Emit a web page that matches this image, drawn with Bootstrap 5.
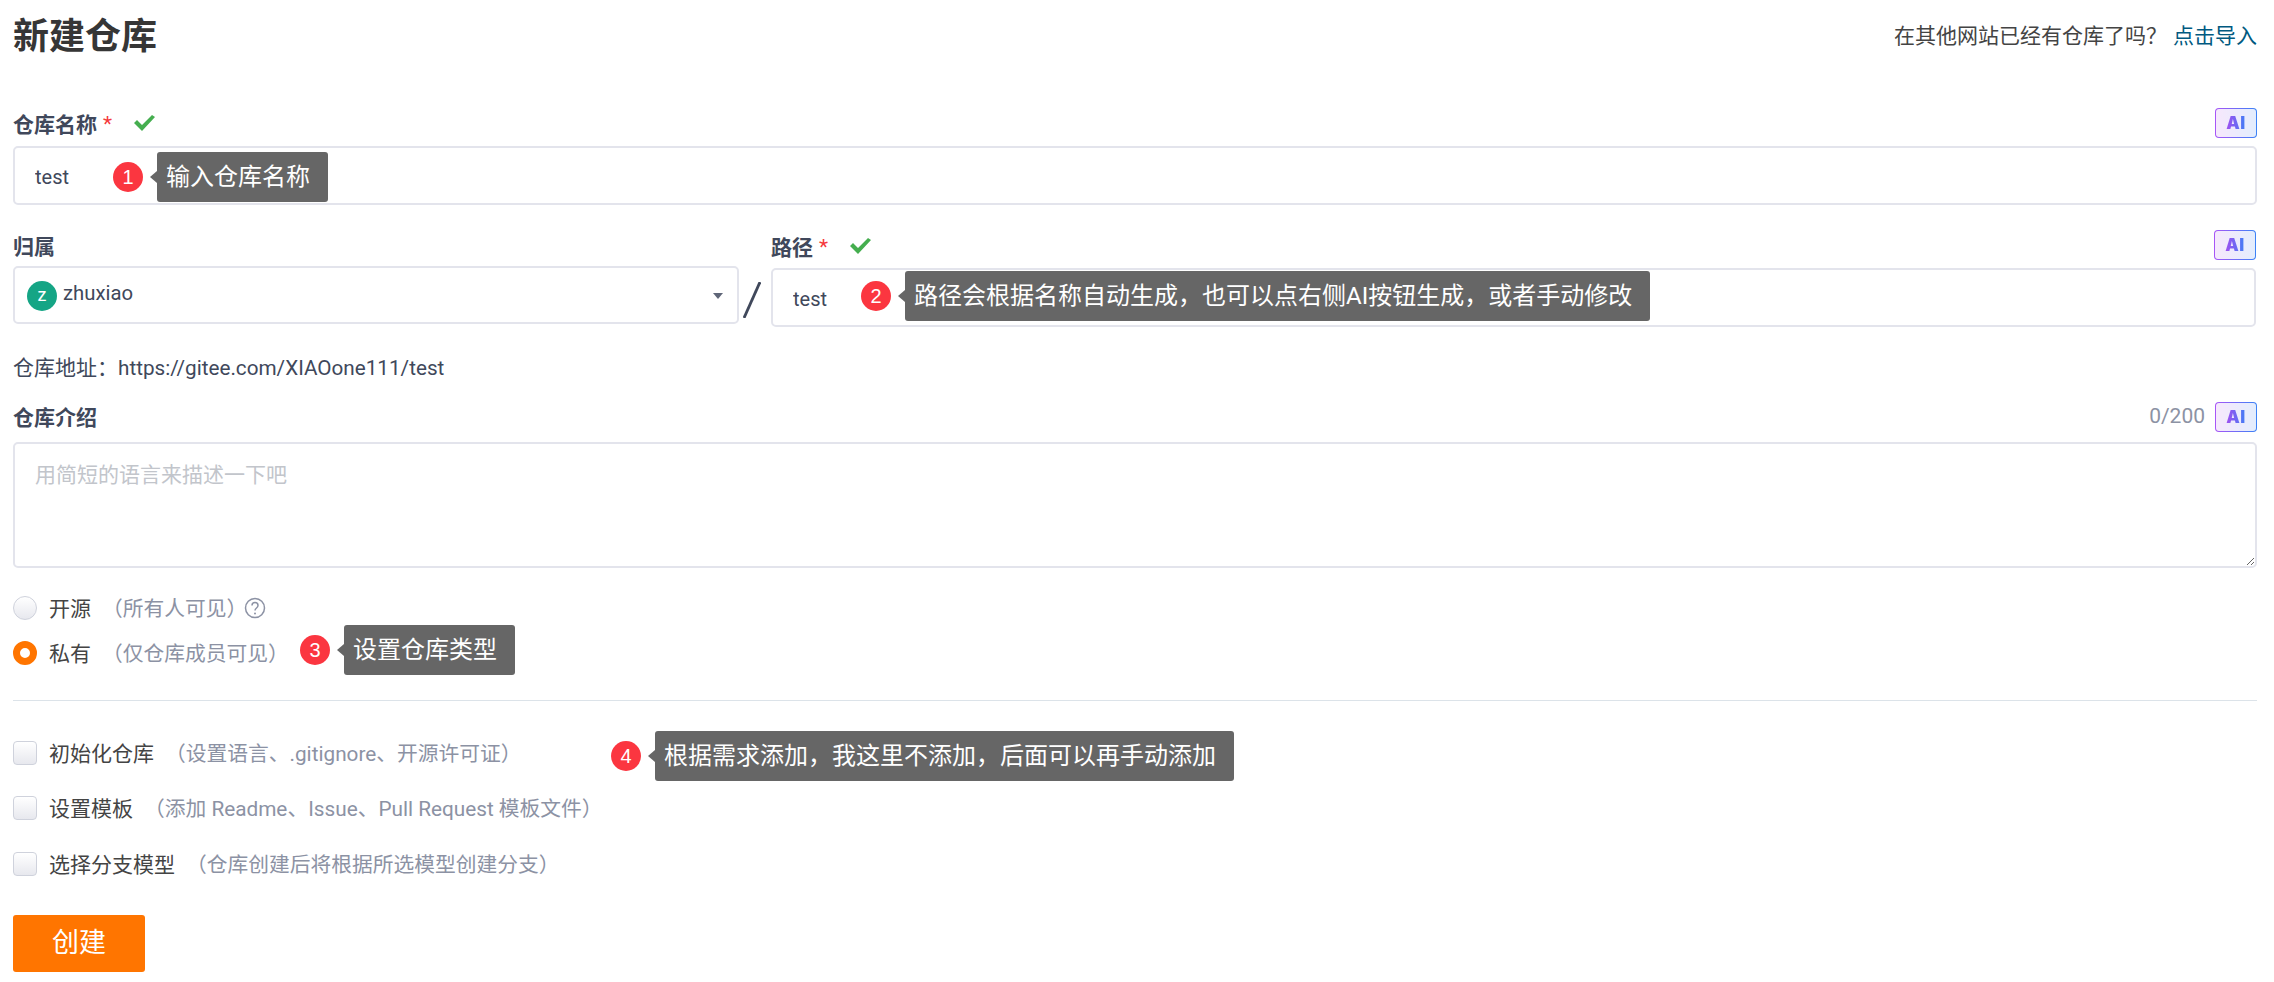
<!DOCTYPE html>
<html lang="zh-CN">
<head>
  <meta charset="UTF-8">
  <meta name="viewport" content="width=device-width, initial-scale=1">
  <title>新建仓库</title>
  <link href="https://cdn.jsdelivr.net/npm/bootstrap@5.3.0/dist/css/bootstrap.min.css" rel="stylesheet">
  <style>
    body {
      font-family: Roboto, "Noto Sans CJK SC", sans-serif;
      font-size: 21px;
      color: #40485b;
      background: #fff;
    }
    .page { padding: 0 17px 0 13px; }
    .page-head { height: 108px; padding-top: 14px; }
    .page-title { font-size: 36px; font-weight: 700; line-height: 46px; color: #363636; margin: 0; }
    .import-tip { color: #444; line-height: 44px; }
    .import-tip a { color: #005980; text-decoration: none; margin-left: 6px; }
    .label-row { height: 30px; margin-bottom: 8px; }
    .field-label { font-weight: 700; color: #40485b; line-height: 30px; }
    .name-label { padding-top: 4px; }
    .req { color: #f5393c; font-weight: 400; margin-left: 6px; }
    .ok-mark { width: 21px; height: 16px; margin-left: 22px; margin-top: -4px; }
    .ai-btn {
      width: 42px; height: 30px; border: 1px solid transparent; border-radius: 4px;
      background: linear-gradient(90deg, #f6e8fc, #e3edfd) padding-box, linear-gradient(90deg, #a855f7, #3b82f6) border-box;
      font-family: Inter, sans-serif; font-size: 17px; font-weight: 900; line-height: 28px; letter-spacing: .5px; text-align: center;
    }
    .ai-btn span {
      background: linear-gradient(90deg, #a24ff0, #3f7ef5);
      -webkit-background-clip: text; background-clip: text; color: transparent;
    }
    .form-control.plain-input {
      height: 59px; font-size: 20px; color: #40485b; padding: 2px 20px 0;
      border: 2px solid #e3e4ec; border-radius: 5px; box-shadow: none;
    }
    .form-control.intro-input {
      height: 126px; font-size: 21px; padding: 16px 20px; line-height: 30px;
      border: 2px solid #e3e4ec; border-radius: 5px; box-shadow: none;
    }
    .intro-input::placeholder { color: #c2c5cb; }
    .second-row { margin-top: 25px; }
    .owner-col { width: 726px; }
    .owner-label { height: 32px; margin-bottom: 4px; padding-top: 2px; }
    .owner-select {
      height: 58px; border: 2px solid #e3e4ec; border-radius: 5px; padding: 0 14px 4px 12px; font-size: 20.3px;
    }
    .owner-ava {
      width: 30px; height: 30px; background: #15a585; color: #fff; font-size: 18px; line-height: 28px;
      text-align: center; border-radius: 50%; margin: 6px 6px 0 0;
    }
    .owner-caret { width: 0; height: 0; border: 5.5px solid transparent; border-top: 6px solid #5f6678; border-bottom: 0; margin-top: 6px; }
    .path-slash { width: 32px; padding: 52px 0 0 4px; }
    .path-slash svg { width: 18px; height: 36px; }
    .path-label { padding-top: 6px; }
    .path-col { margin-right: 1px; }
    .repo-url { margin-top: 26px; line-height: 30px; }
    .url-text { font-size: 20.7px; }
    .intro-block { margin-top: 19px; }
    .intro-block .label-row { margin-bottom: 10px; }
    .intro-label { padding-top: 2px; }
    .counter { color: #8c92a4; margin-right: 10px; }
    .opt-row { height: 32px; gap: 12px; color: #444; }
    .opt-row > span:not(.callout) { padding-top: 3px; }
    .opt-row .form-check-input {
      width: 24px; height: 24px; margin: 0; flex-shrink: 0; float: none;
      border: 1px solid #cfd2dc; background-color: #fff;
      background-image: linear-gradient(180deg, #fff, #e7e8ee);
    }
    .opt-row input[type=checkbox] { border-radius: 4px; }
    .opt-row .form-check-input:checked {
      background-color: #fff; background-image: none; border: 7px solid #ff7500;
    }
    .opt-hint { color: #8c92a4; margin-left: 11px; font-size: 20.75px; }
    .help-mark { width: 22px; height: 22px; margin-left: -15px; }
    .radios { margin-top: 24px; }
    .radios .opt-row + .opt-row { margin-top: 13px; }
    .split { margin: 31px 0 36px; border: 0; border-top: 1px solid #dce3e9; opacity: 1; }
    .checks .opt-row + .opt-row { margin-top: 23px; }
    .checks .opt-row:last-child { margin-top: 24px; }
    .btn.create-btn {
      width: 132px; height: 57px; margin-top: 35px; padding: 0; font-size: 27px; line-height: 1;
      background: #ff7500; border: 0; border-radius: 3px; color: #fff;
    }
    .callout { position: absolute; display: flex; align-items: center; gap: 14px; white-space: nowrap; z-index: 2; }
    .step-dot {
      width: 30px; height: 30px; border-radius: 50%; background: #fb3640; color: #fff;
      font-family: "Liberation Sans", sans-serif; font-size: 20px; line-height: 30px; text-align: center;
    }
    .tip-box {
      position: relative; height: 50px; padding: 0 18px 0 9px; background: #666; color: #fff;
      font-size: 24px; line-height: 50px; border-radius: 3px;
    }
    .tip-box::before {
      content: ""; position: absolute; left: -7px; top: 19px;
      border: 6px solid transparent; border-left: 0; border-right: 7px solid #666;
    }
    .callout-name { left: 100px; top: 6px; }
    .callout-path { left: 90px; top: 3px; }
    .callout-type { left: 287px; top: -12px; }
    .callout-init { left: 598px; top: -6px; }
  </style>
</head>
<body>

  <div class="page">
    <div class="page-head d-flex justify-content-between align-items-start">
      <h1 class="page-title">新建仓库</h1>
      <div class="import-tip">在其他网站已经有仓库了吗？<a href="#">点击导入</a></div>
    </div>

    <!-- 仓库名称 -->
    <div class="d-flex justify-content-between align-items-center label-row">
      <div class="d-flex align-items-center name-label">
        <span class="field-label">仓库名称</span><span class="req">*</span>
        <svg class="ok-mark" viewBox="0 0 21 16"><path d="M0 8l3-3 5 5L18 0l3 2L8 16z" fill="#45ae4f"/></svg>
      </div>
      <div class="ai-btn"><span>AI</span></div>
    </div>
    <div class="position-relative">
      <input type="text" class="form-control plain-input" value="test">
      <div class="callout callout-name"><span class="step-dot">1</span><span class="tip-box">输入仓库名称</span></div>
    </div>

    <!-- 归属 / 路径 -->
    <div class="d-flex align-items-start second-row">
      <div class="owner-col flex-shrink-0">
        <div class="field-label owner-label">归属</div>
        <div class="owner-select d-flex align-items-center">
          <span class="owner-ava">z</span><span>zhuxiao</span>
          <span class="owner-caret ms-auto"></span>
        </div>
      </div>
      <div class="path-slash flex-shrink-0 d-flex">
        <svg viewBox="0 0 18 36"><path d="M17 0L1 36" stroke="#40485b" stroke-width="2.8" fill="none"/></svg>
      </div>
      <div class="path-col flex-grow-1">
        <div class="d-flex justify-content-between align-items-center label-row">
          <div class="d-flex align-items-center path-label">
            <span class="field-label">路径</span><span class="req">*</span>
            <svg class="ok-mark" viewBox="0 0 21 16"><path d="M0 8l3-3 5 5L18 0l3 2L8 16z" fill="#45ae4f"/></svg>
          </div>
          <div class="ai-btn"><span>AI</span></div>
        </div>
        <div class="position-relative">
          <input type="text" class="form-control plain-input" value="test">
          <div class="callout callout-path"><span class="step-dot">2</span><span class="tip-box">路径会根据名称自动生成，也可以点右侧AI按钮生成，或者手动修改</span></div>
        </div>
      </div>
    </div>

    <div class="repo-url">仓库地址：<span class="url-text">https://gitee.com/XIAOone111/test</span></div>

    <!-- 仓库介绍 -->
    <div class="intro-block">
      <div class="d-flex align-items-center label-row">
        <span class="field-label intro-label">仓库介绍</span>
        <span class="counter ms-auto">0/200</span>
        <div class="ai-btn"><span>AI</span></div>
      </div>
      <textarea class="form-control intro-input" placeholder="用简短的语言来描述一下吧"></textarea>
    </div>

    <!-- 仓库类型 -->
    <div class="radios">
      <div class="opt-row d-flex align-items-center position-relative">
        <input class="form-check-input" type="radio" name="vis">
        <span>开源<span class="opt-hint">（所有人可见）</span></span>
        <svg class="help-mark" viewBox="0 0 22 22"><circle cx="11" cy="11" r="9.5" fill="none" stroke="#8c92a4" stroke-width="1.5"/><path d="M8 8.500c0-4 6-4 6 0 0 2.500-3 2.500-3 5" fill="none" stroke="#8c92a4" stroke-width="1.5"/><circle cx="11" cy="16.500" r="1" fill="#8c92a4"/></svg>
      </div>
      <div class="opt-row d-flex align-items-center position-relative">
        <input class="form-check-input" type="radio" name="vis" checked>
        <span>私有<span class="opt-hint">（仅仓库成员可见）</span></span>
        <div class="callout callout-type"><span class="step-dot">3</span><span class="tip-box">设置仓库类型</span></div>
      </div>
    </div>

    <hr class="split">

    <div class="checks">
      <div class="opt-row d-flex align-items-center position-relative">
        <input class="form-check-input" type="checkbox">
        <span>初始化仓库<span class="opt-hint">（设置语言、.gitignore、开源许可证）</span></span>
        <div class="callout callout-init"><span class="step-dot">4</span><span class="tip-box">根据需求添加，我这里不添加，后面可以再手动添加</span></div>
      </div>
      <div class="opt-row d-flex align-items-center">
        <input class="form-check-input" type="checkbox">
        <span>设置模板<span class="opt-hint">（添加 Readme、Issue、Pull Request 模板文件）</span></span>
      </div>
      <div class="opt-row d-flex align-items-center">
        <input class="form-check-input" type="checkbox">
        <span>选择分支模型<span class="opt-hint">（仓库创建后将根据所选模型创建分支）</span></span>
      </div>
    </div>

    <button class="btn create-btn">创建</button>
  </div>

  <script src="https://cdn.jsdelivr.net/npm/bootstrap@5.3.0/dist/js/bootstrap.bundle.min.js"></script>
</body>
</html>
